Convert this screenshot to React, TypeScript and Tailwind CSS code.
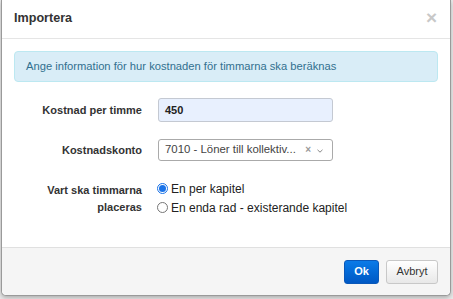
import React from 'react';

function Radio({ checked, label }: { checked?: boolean; label: string }) {
  return (
    <div className="flex items-center h-[19px]">
      <span
        className={
          checked
            ? 'w-[11px] h-[11px] rounded-full border border-[#1a73e8] flex items-center justify-center'
            : 'w-[11px] h-[11px] rounded-full border border-[#767676] bg-white'
        }
      >
        {checked && <span className="w-[7px] h-[7px] rounded-full bg-[#1a73e8]" />}
      </span>
      <span className="ml-[3px] text-[12px] text-[#222]">{label}</span>
    </div>
  );
}

export default function App() {
  return (
    <div
      className="w-[453px] h-[299px] bg-[#e9e9e9] overflow-hidden"
      style={{ fontFamily: '"Liberation Sans", Arial, sans-serif' }}
    >
      <div className="ml-[1px] w-[450px] h-[296px] bg-white border border-t-0 border-[#9a9a9a] rounded-b-[5px] shadow-[0_2px_4px_rgba(0,0,0,0.25)] flex flex-col">
        {/* header */}
        <div className="h-[39px] border-b border-[#e5e5e5] pl-[12px] pr-[13px] flex items-center justify-between">
          <h4 className="text-[12.6px] font-bold text-[#333] leading-none pb-[2px]">Importera</h4>
          <span className="text-[19px] font-bold text-[#c8c8c8] leading-none pb-[4px]">×</span>
        </div>

        {/* body */}
        <div className="flex-1 p-[12px]">
          <div className="h-[31px] bg-[#d9edf7] border border-[#bce8f1] rounded-[4px] px-[11px] flex items-center text-[11.2px] text-[#31708f]">
            Ange information för hur kostnaden för timmarna ska beräknas
          </div>

          <div className="mt-[16px] flex items-center">
            <label className="w-[128px] text-right text-[11px] font-bold text-[#333]">Kostnad per timme</label>
            <div className="ml-[16px] w-[175px] h-[24px] bg-[#e8f0fe] border border-[#c4c9d2] rounded-[3px] px-[6px] flex items-center text-[11px] font-bold text-[#222]">
              450
            </div>
          </div>

          <div className="mt-[17px] flex items-center">
            <label className="w-[128px] text-right text-[11px] font-bold text-[#333]">Kostnadskonto</label>
            <div className="ml-[16px] w-[175px] h-[22px] bg-white border border-[#aaa] rounded-[3px] pl-[6px] pr-[9px] flex items-center text-[11.4px] text-[#444]">
              <span className="flex-1">7010 - Löner till kollektiv...</span>
              <span className="text-[10px] font-bold text-[#999] leading-none mr-[6px]">×</span>
              <svg width="6" height="4" viewBox="0 0 6 4" className="mt-[1px]">
                <path d="M0.5 0.8 L3 3.2 L5.5 0.8" fill="none" stroke="#888" strokeWidth="1" />
              </svg>
            </div>
          </div>

          <div className="mt-[18px] flex">
            <div className="w-[128px] pt-[3px] text-right text-[11px] font-bold text-[#333] leading-[17px]">
              Vart ska timmarna
              <br />
              placeras
            </div>
            <div className="ml-[15px] flex flex-col">
              <Radio checked label="En per kapitel" />
              <Radio label="En enda rad - existerande kapitel" />
            </div>
          </div>
        </div>

        {/* footer */}
        <div className="h-[48px] border-t border-[#e0e0e0] bg-[#f5f5f5] rounded-b-[5px] pr-[12px] flex items-center justify-end gap-[7px]">
          <button className="w-[35px] h-[24px] rounded-[3px] border border-[#0a58b8] bg-gradient-to-b from-[#0b7be8] to-[#0058c4] text-white text-[11px] font-bold">
            Ok
          </button>
          <button className="w-[52px] h-[24px] rounded-[3px] border border-[#c8c8c8] bg-gradient-to-b from-white to-[#e8e8e8] text-[#333] text-[11px]">
            Avbryt
          </button>
        </div>
      </div>
    </div>
  );
}
